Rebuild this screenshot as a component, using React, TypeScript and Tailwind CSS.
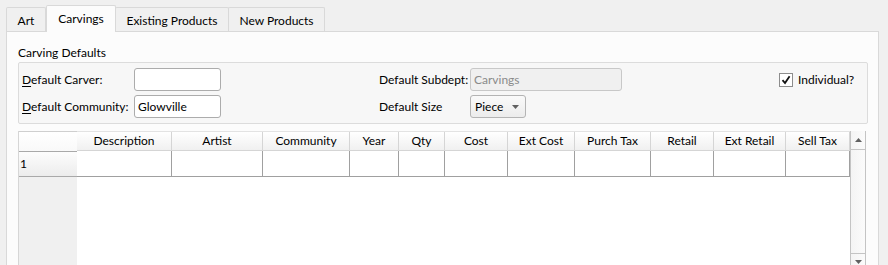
import React from "react";

const columns = [
  { name: "Description", w: "w-[95px]" },
  { name: "Artist", w: "w-[91px]" },
  { name: "Community", w: "w-[87px]" },
  { name: "Year", w: "w-[49px]" },
  { name: "Qty", w: "w-[46px]" },
  { name: "Cost", w: "w-[63px]" },
  { name: "Ext Cost", w: "w-[67px]" },
  { name: "Purch Tax", w: "w-[76px]" },
  { name: "Retail", w: "w-[63px]" },
  { name: "Ext Retail", w: "w-[72px]" },
  { name: "Sell Tax", w: "w-[64px]" },
];

const tabs = [
  { name: "Art", w: "w-[40px]" },
  { name: "Carvings", w: "w-[70px]", active: true },
  { name: "Existing Products", w: "w-[114px]" },
  { name: "New Products", w: "w-[97px]" },
];

function Mnemonic({ text }: { text: string }) {
  return (
    <span>
      <span className="underline underline-offset-2">{text[0]}</span>
      {text.slice(1)}
    </span>
  );
}

function Arrow({ up }: { up?: boolean }) {
  return (
    <svg width="7" height="4" viewBox="0 0 7 4">
      <path d={up ? "M0 4 L3.5 0 L7 4 Z" : "M0 0 L7 0 L3.5 4 Z"} fill="#606060" />
    </svg>
  );
}

export default function App() {
  return (
    <main
      className="w-[888px] h-[265px] overflow-hidden bg-[#f0f0f0] text-[12px] text-black pl-[6px] pt-[5px] pr-[9px]"
      style={{ fontFamily: "Lato, 'Noto Sans', sans-serif" }}
    >
      {/* ── TABS ─────────────────────────────────────────── */}
      <div className="flex items-end h-[26px]">
        {tabs.map((t) =>
          t.active ? (
            <div
              key={t.name}
              className={`${t.w} h-[27px] -mb-px relative z-10 bg-[#fcfcfc] border border-b-0 border-[#d9d9d9] flex items-center justify-center rounded-t-[2px]`}
            >
              {t.name}
            </div>
          ) : (
            <div
              key={t.name}
              className={`${t.w} h-[24px] bg-[#f0f0f0] border border-b-0 border-[#d9d9d9] -ml-px first:ml-0 flex items-center justify-center rounded-t-[2px] pt-[2px]`}
            >
              {t.name}
            </div>
          )
        )}
      </div>

      {/* ── PANE ─────────────────────────────────────────── */}
      <section className="h-[240px] bg-[#fcfcfc] border border-[#d9d9d9] pl-[11px] pr-[10px] pt-[14px]">
        <div className="leading-[14px] mb-[2px]">Carving Defaults</div>

        <div className="h-[62px] bg-[#f7f7f7] border border-[#dcdcdc] rounded-[2px] pl-[3px] pt-[5px] flex">
          <div className="flex flex-col gap-[4px]">
            <div className="flex items-center h-[23px]">
              <span className="w-[112px]">
                <Mnemonic text="Default Carver:" />
              </span>
              <div className="w-[87px] h-[23px] bg-white border border-[#acacac] rounded-[3px]" />
            </div>
            <div className="flex items-center h-[23px]">
              <span className="w-[112px]">
                <Mnemonic text="Default Community:" />
              </span>
              <div className="w-[87px] h-[23px] bg-white border border-[#acacac] rounded-[3px] flex items-center px-[3px]">
                Glowville
              </div>
            </div>
          </div>

          <div className="flex flex-col gap-[4px] ml-[158px]">
            <div className="flex items-center h-[23px]">
              <span className="w-[91px]">Default Subdept:</span>
              <div className="w-[152px] h-[23px] bg-[#f0f0f0] border border-[#c8c8c8] rounded-[3px] flex items-center px-[3px] text-[#8a8a8a]">
                Carvings
              </div>
            </div>
            <div className="flex items-center h-[23px]">
              <span className="w-[91px]">Default Size</span>
              <div className="w-[56px] h-[23px] bg-gradient-to-b from-[#fafafa] to-[#ececec] border border-[#b4b4b4] rounded-[3px] flex items-center pl-[4px] gap-[9px]">
                Piece
                <Arrow />
              </div>
            </div>
          </div>

          <div className="ml-[157px] mt-[5px] flex items-start gap-[5px] h-[14px]">
            <div className="w-[14px] h-[14px] bg-white border border-[#8d8d8d] flex items-center justify-center">
              <svg width="10" height="10" viewBox="0 0 10 10">
                <path d="M1.5 5.2 L4 8 L8.6 1.2" fill="none" stroke="#111" strokeWidth="1.8" />
              </svg>
            </div>
            <span className="leading-[14px]">Individual?</span>
          </div>
        </div>

        {/* ── TABLE ─────────────────────────────────────── */}
        <div className="mt-[7px] flex h-[138px]">
          <div className="w-[59px] flex flex-col bg-[#f0f0f0] border-l border-[#d6d6d6]">
            <div className="h-[20px] bg-gradient-to-b from-white to-[#f9f9f9] border-t border-[#cfcfcf]" />
            <div className="h-[26px] bg-gradient-to-b from-[#fdfdfd] to-[#ececec] border-y border-[#a9a9a9] flex items-center pl-[1px]">
              1
            </div>
          </div>

          <div className="flex flex-col bg-white">
            <div className="flex h-[20px] border-t border-[#e3e3e3]">
              {columns.map((c) => (
                <div
                  key={c.name}
                  className={`${c.w} h-full bg-gradient-to-b from-white to-[#f0f0f0] border-r border-b border-[#d5d5d5] flex items-center justify-center`}
                >
                  {c.name}
                </div>
              ))}
            </div>
            <div className="flex h-[26px]">
              {columns.map((c) => (
                <div key={c.name} className={`${c.w} h-full bg-white border-r border-b border-[#a0a0a0]`} />
              ))}
            </div>
          </div>

          <div className="w-[16px] flex flex-col bg-gradient-to-r from-[#f4f4f4] to-[#fbfbfb] border-x border-[#c4c4c4]">
            <div className="h-[19px] flex items-center justify-center border-b border-[#c4c4c4]">
              <Arrow up />
            </div>
            <div className="flex-1" />
            <div className="h-[16px] flex items-center justify-center border-t border-[#c4c4c4]">
              <Arrow />
            </div>
          </div>
        </div>
      </section>
    </main>
  );
}
